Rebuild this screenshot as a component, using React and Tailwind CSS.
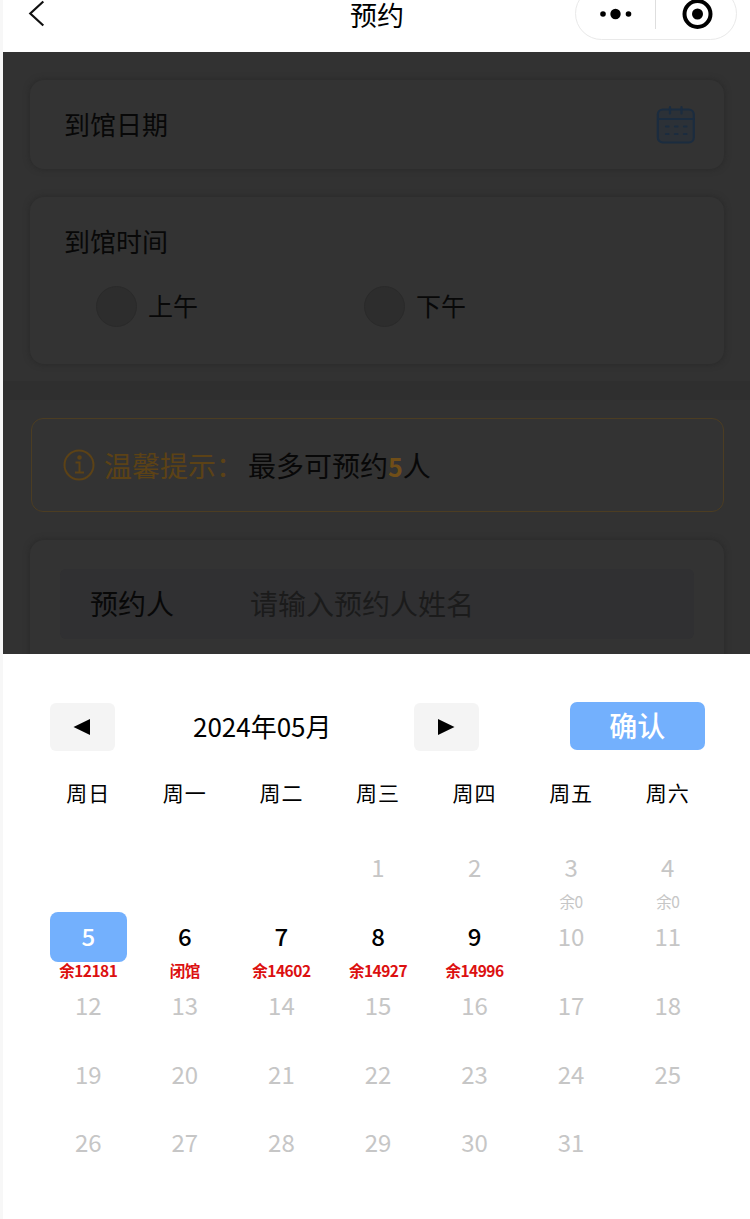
import React from "react";

const weekdays = ["周日", "周一", "周二", "周三", "周四", "周五", "周六"];
const notes = { 3: "余0", 4: "余0", 5: "余12181", 6: "闭馆", 7: "余14602", 8: "余14927", 9: "余14996" };
const cells = [null, null, null, ...Array.from({ length: 31 }, (_, i) => i + 1)];

function Header() {
  return (
    <header className="relative h-[51.5px] shrink-0 bg-white">
      <svg className="absolute left-[25px] top-0" width="18" height="28" viewBox="0 0 18 28" fill="none" stroke="#111" strokeWidth="2.2">
        <path d="M15.3 1.5 2.3 13.5 15.3 25.5" />
      </svg>
      <h1 className="absolute left-[347px] top-0 text-[27px] leading-[30px] text-black">预约</h1>
      <div className="absolute left-[572px] top-[-13px] flex h-[53px] w-[162px] items-center rounded-full border border-[#e9e9e9]">
        <svg className="shrink-0" width="160" height="51" viewBox="0 0 160 51">
          <circle cx="27" cy="26" r="2.8" />
          <circle cx="39.5" cy="26" r="5.2" />
          <circle cx="52.5" cy="26" r="2.8" />
          <path d="M79.5 11v30" stroke="#dedede" />
          <circle cx="121.5" cy="26" r="13" fill="none" stroke="#000" strokeWidth="4" />
          <circle cx="121.5" cy="26" r="5.5" />
        </svg>
      </div>
    </header>
  );
}

function CalendarIcon() {
  return (
    <svg width="40" height="40" viewBox="0 0 40 40" fill="none" stroke="#1b2c3f" strokeWidth="2.2" strokeLinecap="round">
      <rect x="1.8" y="4.5" width="36" height="33" rx="5" fill="#2c3137" />
      <path d="M2 14h36M14 2v6.500M25.500 2v6.500" />
      <path d="M10 21.500h2.500M19 21.500h2.500M28 21.500h2.500M10 29h2.500M19 29h2.500M28 29h2.500" />
    </svg>
  );
}

function Radio({ label }) {
  return (
    <div className="flex w-[268px] items-center gap-[11px] text-[25px] leading-10">
      <span className="size-[41px] rounded-full border border-[#2a2a2a] bg-[#2d2d2d]" />
      <span className="pb-[2px]">{label}</span>
    </div>
  );
}

function Booking() {
  return (
    <main className="flex h-[602px] shrink-0 flex-col overflow-hidden bg-[#323232] text-[#080808]">
      <section className="mx-[27px] mr-[26px] mt-[28.5px] flex h-[89px] shrink-0 items-center justify-between rounded-[14px] bg-[#333] pl-[34px] pr-[28px] shadow-[0_0_6px_0px_#282828]">
        <span className="pb-[2px] text-[26px] leading-9">到馆日期</span>
        <CalendarIcon />
      </section>
      <section className="ml-[27px] mr-[26px] mt-7 h-[167px] shrink-0 rounded-[14px] bg-[#333] px-[34px] pt-[26px] shadow-[0_0_6px_0px_#282828]">
        <div className="text-[26px] leading-9">到馆时间</div>
        <div className="ml-8 mt-[26px] flex">
          <Radio label="上午" />
          <Radio label="下午" />
        </div>
      </section>
      <div className="mt-[17px] h-[19px] shrink-0 bg-[#2f2f2f]" />
      <section className="ml-7 mr-[26px] mt-[18px] flex h-[93.5px] shrink-0 items-center rounded-[12px] border border-[#4c3d22] bg-[#333] pl-[31px] text-[28px]">
        <svg className="mr-[9px]" width="32" height="32" viewBox="0 0 32 32" fill="none" stroke="#5c4216" strokeWidth="2">
          <circle cx="16" cy="16" r="14.500" />
          <path d="M12.500 13.500h4v10M12 23.500h9" />
          <circle cx="16.500" cy="8.500" r="1.300" fill="#5c4216" />
        </svg>
        <span className="mr-1 text-[#5c4216]">温馨提示：</span>
        <span>最多可预约<b className="text-[25px] text-[#704e18]">5</b>人</span>
      </section>
      <section className="ml-[27px] mr-[26px] mt-7 h-[180px] shrink-0 rounded-[14px] bg-[#333] px-[30px] pt-[29px] shadow-[0_0_6px_0px_#282828]">
        <div className="flex h-[70px] items-center rounded-md bg-[#303032] pb-[2px] pl-[30px] text-[28px]">
          <span className="w-[160px]">预约人</span>
          <span className="text-[#1b1b1b]">请输入预约人姓名</span>
        </div>
      </section>
    </main>
  );
}

function Day({ day }) {
  if (!day) return <div />;
  const selected = day === 5;
  const open = day > 5 && day < 10;
  return (
    <div className="flex flex-col items-center">
      <div
        className={
          "flex h-[49.5px] w-[77px] shrink-0 items-center justify-center rounded-lg pb-[2px] text-[24px] " +
          (selected ? "bg-[#73b0fd] font-medium text-white" : open ? "font-medium text-black" : "text-[#c6c6c6]")
        }
      >
        {day}
      </div>
      <div className={"-mt-px whitespace-nowrap text-[15.5px] leading-[18px] tracking-[-0.5px] " + (day < 5 ? "text-[#c6c6c6]" : "font-bold text-[#dc1010]")}>
        {notes[day]}
      </div>
    </div>
  );
}

function Picker() {
  return (
    <section className="flex-1 bg-white pl-[37px] text-black">
      <div className="mt-[48px] flex h-[49.5px] items-end pl-[10px]">
        <button className="flex h-12 w-[64.5px] items-center justify-center rounded-md bg-[#f4f4f4]">
          <svg width="18" height="18" viewBox="0 0 18 18"><path d="M17 1v16L0.500 9z" /></svg>
        </button>
        <div className="w-[299.500px] whitespace-nowrap text-center text-[26px] leading-[50px]">
          <span className="mr-[4px]">2024年05月</span>
        </div>
        <button className="flex h-12 w-[64.5px] items-center justify-center rounded-md bg-[#f4f4f4]">
          <svg width="18" height="18" viewBox="0 0 18 18"><path d="M1 1v16L17.500 9z" /></svg>
        </button>
        <button className="mb-[1.5px] ml-[91px] flex h-12 w-[135.5px] items-center justify-center rounded-[7px] bg-[#73b0fd] pb-[2px] text-[28px] font-medium text-white">
          确认
        </button>
      </div>
      <div className="mt-[25px] grid w-[676px] grid-cols-7 text-center text-[21px] leading-8 tracking-[1px]">
        {weekdays.map((d) => <div key={d}>{d}</div>)}
      </div>
      <div className="mt-[35.500px] grid w-[676px] auto-rows-[68.75px] grid-cols-7">
        {cells.map((d, i) => <Day key={i} day={d} />)}
      </div>
    </section>
  );
}

export default function App() {
  return (
    <div className="flex h-[1219px] w-[750px] flex-col overflow-hidden border-l-[3px] border-[#f7f7f7] bg-white font-['Noto_Sans_CJK_SC',sans-serif]">
      <Header />
      <Booking />
      <Picker />
    </div>
  );
}
